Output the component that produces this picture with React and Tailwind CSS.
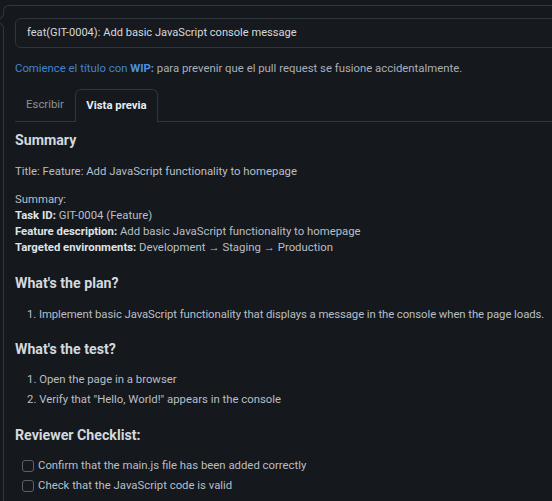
import React from "react";

const F = { fontFamily: "Roboto, 'Noto Sans', sans-serif" };

function Check({ children }) {
  return (
    <li className="flex items-center h-[20px]">
      <span className="w-[12px] h-[12px] rounded-[3px] border border-[#5b6169] mr-[4px] ml-[7px] shrink-0" />
      <span>{children}</span>
    </li>
  );
}

export default function App() {
  return (
    <div className="w-[552px] h-[501px] overflow-hidden bg-[#15181c] text-[#b8bfc7] text-[11.35px]" style={F}>
      <div className="relative ml-[3px] mt-[5px] w-[620px] h-[520px] border-l border-t border-[#30363d] rounded-tl-[6px] pl-[11px] pt-[12px]">
        <div className="absolute -left-[5px] top-[11px] w-[8px] h-[8px] rotate-45 border-l border-b border-[#30363d] bg-[#15181c]" />
        <div className="h-[30px] border border-[#30363d] rounded-[6px] bg-[#16191d] flex items-center pl-[11px] text-[11.1px] text-[#d4d9de]">
          feat(GIT-0004): Add basic JavaScript console message
        </div>
        <div className="mt-[12px] h-[16px] leading-[16px] text-[#a9b0b8]">
          <span className="text-[#4184d0]">Comience el título con </span>
          <span className="text-[#4d92e0] font-bold">WIP:</span> para prevenir que el pull request se fusione accidentalmente.
        </div>
        <div className="mt-[13px] flex items-end h-[33px] border-b border-[#30363d]">
          <div className="w-[60px] h-[32px] flex items-center justify-center text-[#8a929b]">Escribir</div>
          <div className="w-[83px] h-[33px] -mb-px flex items-center justify-center border border-b-0 border-[#30363d] rounded-t-[6px] bg-[#15181c] font-bold text-[#e6edf3]">
            Vista previa
          </div>
        </div>
        <div className="pt-[7px]">
          <h2 className="text-[14.2px] font-bold text-[#d3d9df] h-[22px] leading-[22px]">Summary</h2>
          <p className="mt-[12px] leading-[16px]">Title: Feature: Add JavaScript functionality to homepage</p>
          <div className="mt-[12px] leading-[16px]">
            <div>Summary:</div>
            <div><b className="text-[#dfe4e9]">Task ID:</b> GIT-0004 (Feature)</div>
            <div><b className="text-[#dfe4e9]">Feature description:</b> Add basic JavaScript functionality to homepage</div>
            <div><b className="text-[#dfe4e9]">Targeted environments:</b> Development → Staging → Production</div>
          </div>
          <h2 className="mt-[17px] text-[14.2px] font-bold text-[#d3d9df] h-[22px] leading-[22px]">What's the plan?</h2>
          <ol className="mt-[10px] leading-[20px] pl-[12px]">
            <li className="tracking-[-0.08px]">1. Implement basic JavaScript functionality that displays a message in the console when the page loads.</li>
          </ol>
          <h2 className="mt-[14px] text-[14.2px] font-bold text-[#d3d9df] h-[22px] leading-[22px]">What's the test?</h2>
          <ol className="mt-[9px] leading-[20px] pl-[12px]">
            <li>1. Open the page in a browser</li>
            <li>2. Verify that "Hello, World!" appears in the console</li>
          </ol>
          <h2 className="mt-[15px] text-[14.2px] font-bold text-[#d3d9df] h-[22px] leading-[22px]">Reviewer Checklist:</h2>
          <ul className="mt-[10px]">
            <Check>Confirm that the main.js file has been added correctly</Check>
            <Check>Check that the JavaScript code is valid</Check>
          </ul>
        </div>
      </div>
    </div>
  );
}
